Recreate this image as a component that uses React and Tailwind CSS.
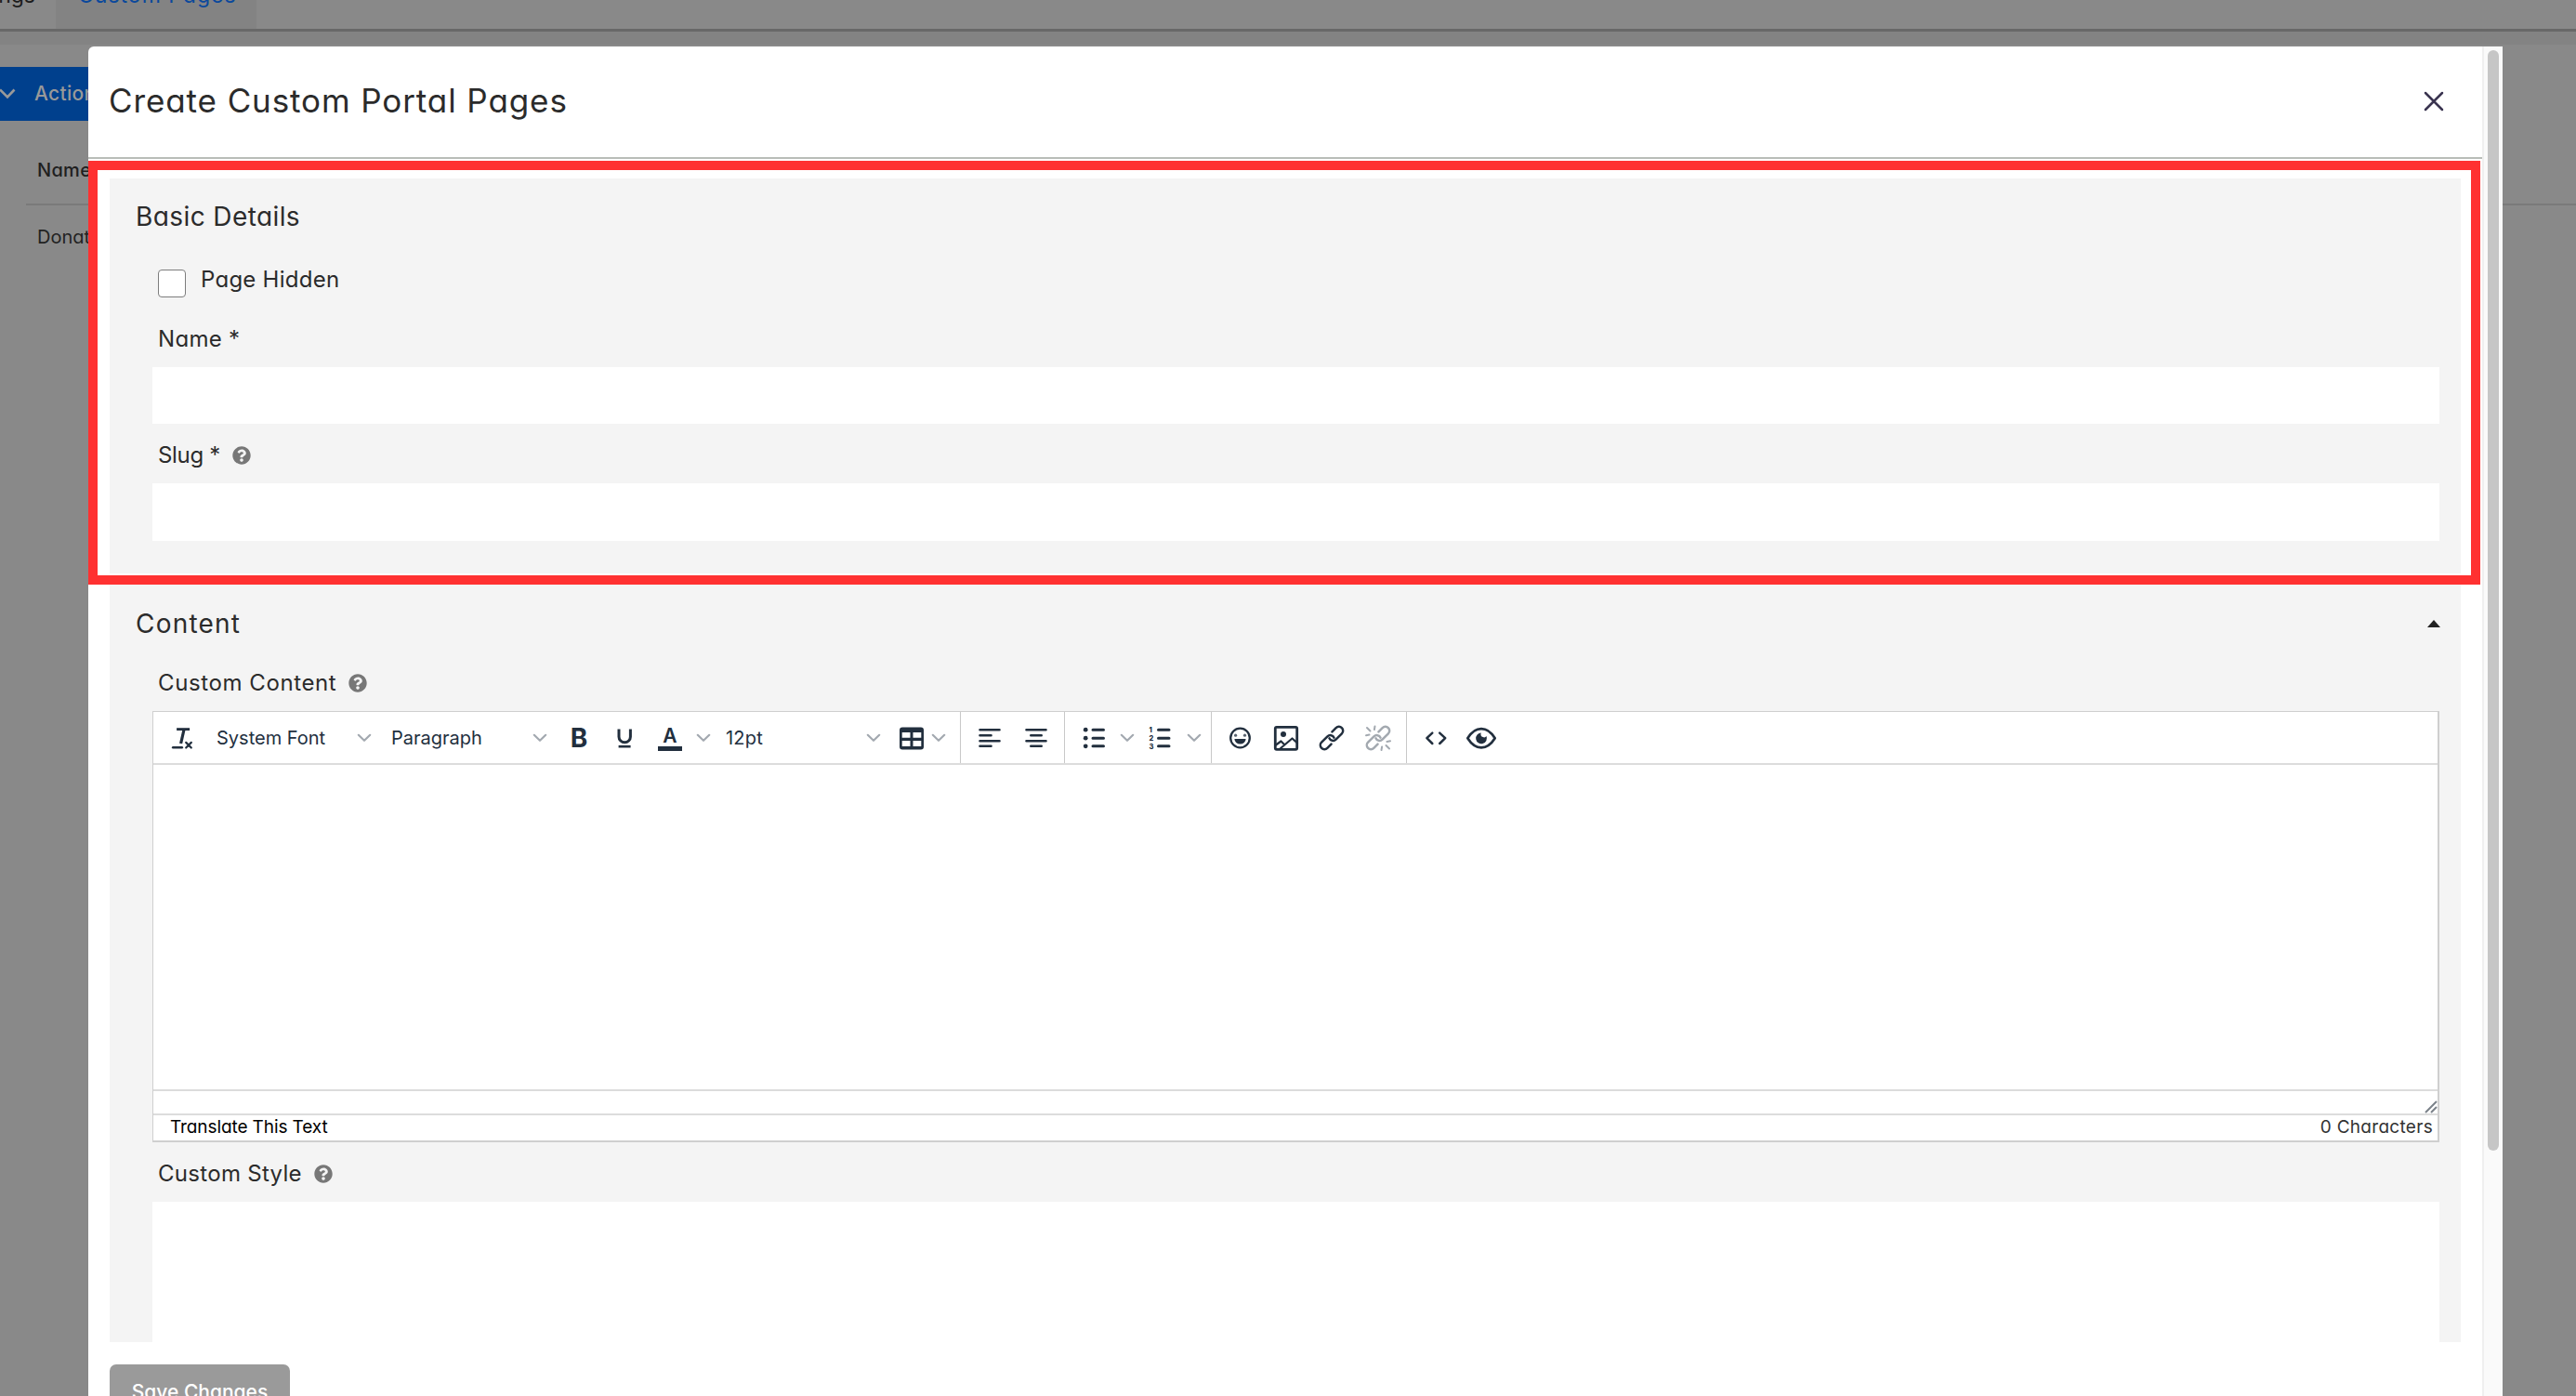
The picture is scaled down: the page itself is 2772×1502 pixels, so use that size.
import { FaQuestionCircle } from "react-icons/fa";

const INK = "#222f3e";
const MUTED = "#a3a9b0";

function Icon({ children, color = INK }) {
  return (
    <svg
      width="36"
      height="36"
      viewBox="0 0 36 36"
      fill="none"
      stroke={color}
      strokeWidth="2.6"
      strokeLinecap="round"
      strokeLinejoin="round"
      className="shrink-0"
    >
      {children}
    </svg>
  );
}

function Chevron() {
  return (
    <svg width="16" height="10" viewBox="0 0 16 10" fill="none" className="shrink-0">
      <path d="M1.8 1.8 8 7.8l6.2-6" stroke={MUTED} strokeWidth="2.2" strokeLinecap="round" strokeLinejoin="round" />
    </svg>
  );
}

function Cell({ className, children }) {
  return <div className={`flex shrink-0 items-center justify-center ${className}`}>{children}</div>;
}

function Select({ label, className }) {
  return (
    <div className={`flex shrink-0 items-center justify-between text-[20px] text-[#222f3e] ${className}`}>
      <span className="pt-px">{label}</span>
      <Chevron />
    </div>
  );
}

function Divider() {
  return <div className="w-px shrink-0 self-stretch bg-[#c8c8c8]" />;
}

const ChainLink = () => (
  <g transform="rotate(-45 18 18)" strokeWidth="2.5">
    <path d="M13 22.4H7a4.4 4.4 0 0 1 0-8.8h9a4.4 4.4 0 0 1 4 6" />
    <path d="M23 13.6h6a4.4 4.4 0 0 1 0 8.8h-9a4.4 4.4 0 0 1-4-6" />
  </g>
);

function Toolbar() {
  return (
    <div className="flex h-[57px] shrink-0 items-stretch border-b-2 border-[#dcdcdc] pl-px [font-feature-settings:normal]">
      <Cell className="w-[60px]">
        <Icon>
          <path d="M12.1 8.6h14" strokeLinecap="butt" strokeWidth="2.8" />
          <path d="M20 9l-3.4 15" strokeLinecap="butt" strokeWidth="3.2" />
          <path d="M8.2 28.3h9.6" />
          <path d="M22.2 22.9l5.6 5.6M27.8 22.9l-5.6 5.6" strokeWidth="2.2" />
        </Icon>
      </Cell>
      <Select label="System Font" className="w-[184px] pl-[7px] pr-2.5" />
      <Select label="Paragraph" className="w-[188px] pl-[11px] pr-[9px]" />
      <Cell className="w-[50px] text-[28px] font-bold text-[#222f3e]">B</Cell>
      <Cell className="w-[49px] pr-0.5">
        <Icon>
          <path d="M12 8.4v8.4a6.2 6 0 0 0 12.4 0V8.4" strokeLinecap="butt" strokeWidth="3" />
          <path d="M11.6 27.2h13" strokeLinecap="butt" />
        </Icon>
      </Cell>
      <Cell className="w-[48px] flex-col pt-[3px]">
        <span className="text-[21px] font-semibold leading-[20px] text-[#222f3e]">A</span>
        <span className="mt-px h-[5px] w-[26px] bg-[#222f3e]" />
      </Cell>
      <Cell className="w-6">
        <Chevron />
      </Cell>
      <Select label="12pt" className="w-[192px] pl-3 pr-[13px] tracking-[0.2px]" />
      <Cell className="w-10">
        <Icon>
          <path
            fill={INK}
            stroke="none"
            fillRule="evenodd"
            d="M8 6.6h20a3 3 0 0 1 3 3v17.8a3 3 0 0 1-3 3H8a3 3 0 0 1-3-3V9.6a3 3 0 0 1 3-3zM7.700 12h8.800v5.800H7.700zM19.500 12h8.800v5.800h-8.800zM7.700 21h8.800v5.900H7.700zM19.500 21h8.800v5.900h-8.800z"
          />
        </Icon>
      </Cell>
      <Cell className="mr-[15px] w-[17px]">
        <Chevron />
      </Cell>
      <Divider />
      <Cell className="w-[61px]">
        <Icon>
          <path d="M7.5 9.2h21M7.5 15.3h12M7.5 21.2h21M7.5 26.8h12" />
        </Icon>
      </Cell>
      <Cell className="mr-[11px] w-[39px]">
        <Icon>
          <path d="M7.5 9.2h21M12.3 15.3h11.4M7.5 21.2h21M12.3 26.8h11.4" />
        </Icon>
      </Cell>
      <Divider />
      <Cell className="w-[58px] pl-[3px]">
        <Icon>
          <path d="M17 9.2h11.5M17 18.2h11.5M17 26.8h11.5" strokeWidth="3" />
          <g fill={INK} stroke="none">
            <circle cx="9.2" cy="9.2" r="2.4" />
            <circle cx="9.2" cy="18.2" r="2.4" />
            <circle cx="9.2" cy="26.8" r="2.4" />
          </g>
        </Icon>
      </Cell>
      <Cell className="w-[17px]">
        <Chevron />
      </Cell>
      <Cell className="w-[54px]">
        <Icon>
          <path d="M16.5 9.2H28M16.5 18.2H28M16.5 26.8H28" strokeWidth="3" />
          <g fill={INK} stroke="none" fontSize="7.5" fontWeight="800">
            <text x="6.5" y="11.8">1</text>
            <text x="6.5" y="20.8">2</text>
            <text x="6.5" y="29.6">3</text>
          </g>
        </Icon>
      </Cell>
      <Cell className="mr-2 w-5">
        <Chevron />
      </Cell>
      <Divider />
      <Cell className="w-[61px]">
        <Icon>
          <circle cx="17.5" cy="18" r="10.3" strokeWidth="2.3" />
          <circle cx="12.6" cy="15.2" r="1.6" fill="#5a6470" stroke="none" />
          <circle cx="22.5" cy="15.2" r="1.6" fill="#5a6470" stroke="none" />
          <path d="M11.4 19h12.2a6.1 5.6 0 0 1-12.2 0z" fill={INK} stroke="none" />
        </Icon>
      </Cell>
      <Cell className="w-[38px]">
        <Icon>
          <rect x="6.3" y="6.3" width="23.4" height="24" rx="1.5" strokeWidth="2.8" />
          <circle cx="15" cy="14" r="3" fill={INK} stroke="none" />
          <path d="M7 25.5l5.5-4 3.5 3.5M11.5 29.5l13-11 5.5 4.8" strokeWidth="2.2" />
        </Icon>
      </Cell>
      <Cell className="w-[60px]">
        <Icon>
          <ChainLink />
        </Icon>
      </Cell>
      <Cell className="mr-[11px] w-[39px]">
        <Icon color={MUTED}>
          <ChainLink />
          <path
            d="M6 7l3.5 3.5M5 15.2l3.5-.6M14.5 5.5l-.6 3.5M30 29.5L26.5 26M31 21.3l-3.5.6M21.5 31l.6-3.5"
            strokeWidth="2"
          />
        </Icon>
      </Cell>
      <Divider />
      <Cell className="w-[61px]">
        <Icon>
          <path d="M14.3 12.6l-5.9 5.6 5.9 5.8M22.2 12.6l6 5.6-6 5.8" strokeWidth="2.5" />
        </Icon>
      </Cell>
      <Cell className="w-[38px]">
        <Icon>
          <path
            d="M3.3 18.2C7.5 11.5 12.5 8.1 18 8.1s10.5 3.4 14.7 10.1C28.5 24.9 23.5 28.3 18 28.3S7.5 24.9 3.3 18.2z"
            strokeWidth="2.7"
          />
          <path
            d="M18 12.5a2.9 2.9 0 0 0 1.8 4.6 3 3 0 0 0 3.7-1 5.9 5.9 0 1 1-5.5-3.6z"
            fill={INK}
            stroke="none"
          />
        </Icon>
      </Cell>
    </div>
  );
}

function Editor() {
  return (
    <div className="flex h-[464px] flex-col border-b-2 border-l border-r-2 border-t border-[#cfcfcf] bg-white">
      <Toolbar />
      <div className="h-[349px] shrink-0" />
      <div className="flex h-[28px] shrink-0 items-end justify-end border-y-2 border-[#dcdcdc]">
        <svg width="14" height="14" viewBox="0 0 14 14" stroke="#7b828a" strokeWidth="2">
          <path d="M1 13L13 1M7 13l6-6" />
        </svg>
      </div>
      <div className="flex grow items-center justify-between pb-px pl-[18px] pr-[5px] text-[19px] leading-[22px]">
        <span className="tracking-[-0.1px] text-black">Translate This Text</span>
        <span className="tracking-[0.3px] text-[#333]">0 Characters</span>
      </div>
    </div>
  );
}

function Label({ children, help, className }) {
  return (
    <div className={`flex items-center gap-[13px] pl-[6px] text-[24px] ${className}`}>
      <span>{children}</span>
      {help && <FaQuestionCircle className="size-5 text-[#777]" />}
    </div>
  );
}

function BackgroundPage() {
  return (
    <div className="h-full bg-[#898989]">
      <div className="flex h-[34px] items-start overflow-hidden border-b-[3px] border-[#686868] text-[23px] leading-[22px]">
        <div className="flex h-full w-[60px] justify-end pr-[22px]">
          <span className="-mt-4 text-[#1c1c1c]">Settings</span>
        </div>
        <div className="h-full w-[216px] bg-[#838383] pl-6">
          <div className="-mt-4 whitespace-nowrap tracking-[1px] text-[#0a489c]">Custom Pages</div>
        </div>
      </div>
      <div className="h-[14px] bg-[#838383]" />
      <div className="pt-6">
        <div className="flex h-[58px] w-[200px] items-center bg-[#00408d] text-[21px] font-medium tracking-[0.3px] text-[#999]">
          <svg width="18" height="14" viewBox="0 0 18 14" fill="none" stroke="#999" strokeWidth="2.6">
            <path d="M0 2.5l8 8 7.5-8" />
          </svg>
          <span className="ml-[19px]">Actions</span>
        </div>
      </div>
      <div className="ml-7 border-b-2 border-[#7a7a7a] pb-[23px] pl-3 pt-[40px] text-[20px] font-medium leading-[26px] tracking-[0.3px] text-[#1f1f1f]">
        Name
      </div>
      <div className="ml-10 mt-[21px] text-[20px] leading-[26px] text-[#222]">Donation</div>
    </div>
  );
}

function CreatePageModal() {
  return (
    <div className="absolute left-[95px] top-[50px] flex h-[1452px] w-[2598px] overflow-hidden rounded-tl-[6px] bg-white text-[#2b2b2b]">
      <div className="flex w-[2576px] flex-col">
        <div className="flex h-[121px] shrink-0 items-center justify-between border-b-2 border-[#b9bdb8] pb-0.5 pl-[22px] pr-[41px]">
          <h1 className="text-[35px] tracking-[0.9px]">Create Custom Portal Pages</h1>
          <svg width="22" height="22" viewBox="0 0 22 22" stroke="#3a3450" strokeWidth="2.5" strokeLinecap="round">
            <path d="M2 2l18 18M20 2L2 20" />
          </svg>
        </div>
        <div className="flex flex-col gap-2 px-[23px] pt-[21px]">
          <section className="h-[425px] bg-[#f4f4f4] pl-[46px] pr-[23px]">
            <h2 className="-ml-[18px] flex h-[82px] items-center text-[28px] tracking-[0.4px]">Basic Details</h2>
            <div className="flex h-[62px] items-start gap-[16px] pl-[6px] pt-4">
              <div className="size-[30px] rounded-[4px] border-[1.5px] border-[#7d7d7d] bg-white" />
              <span className="text-[24px] leading-[22px] tracking-[0.25px]">Page Hidden</span>
            </div>
            <Label className="h-[59px] pb-px tracking-[0.3px]">Name *</Label>
            <div className="h-[61px] bg-white" />
            <Label className="h-[64px] pt-1 tracking-[-0.3px]" help>
              Slug *
            </Label>
            <div className="h-[62px] bg-white" />
          </section>
          <section className="h-[819px] bg-[#f4f4f4] pl-[46px] pr-[23px]">
            <div className="-ml-[18px] flex h-[92px] items-center justify-between">
              <h2 className="text-[28px] tracking-[1.2px]">Content</h2>
              <svg width="14" height="8" viewBox="0 0 14 8" className="-mr-[1px]">
                <path d="M0 8L7 0l7 8z" fill="#222" />
              </svg>
            </div>
            <Label className="h-[48px] pb-3 tracking-[0.6px]" help>
              Custom Content
            </Label>
            <Editor />
            <Label className="h-[64px] pt-[3px] tracking-[0.3px]" help>
              Custom Style
            </Label>
            <div className="h-[151px] bg-white" />
          </section>
        </div>
        <button className="ml-[23px] mt-6 h-[60px] w-[194px] shrink-0 rounded-[7px] bg-[#9a9a9a] text-[21px] font-medium text-white">
          Save Changes
        </button>
      </div>
      <div className="w-[22px] border-l-2 border-[#efefef] bg-[#fafafa] pl-1 pt-1">
        <div className="h-[1184px] w-3 rounded-full bg-[#c6c6c6]" />
      </div>
    </div>
  );
}

function App() {
  return (
    <div className="relative h-[1502px] w-full overflow-hidden font-['Inter',sans-serif] [font-feature-settings:'cv11']">
      <BackgroundPage />
      <CreatePageModal />
      {/* highlight around the basic details section */}
      <div className="absolute left-[95px] top-[173px] h-[456px] w-[2574px] border-[10px] border-[#ff3131]" />
    </div>
  );
}

export default App;
